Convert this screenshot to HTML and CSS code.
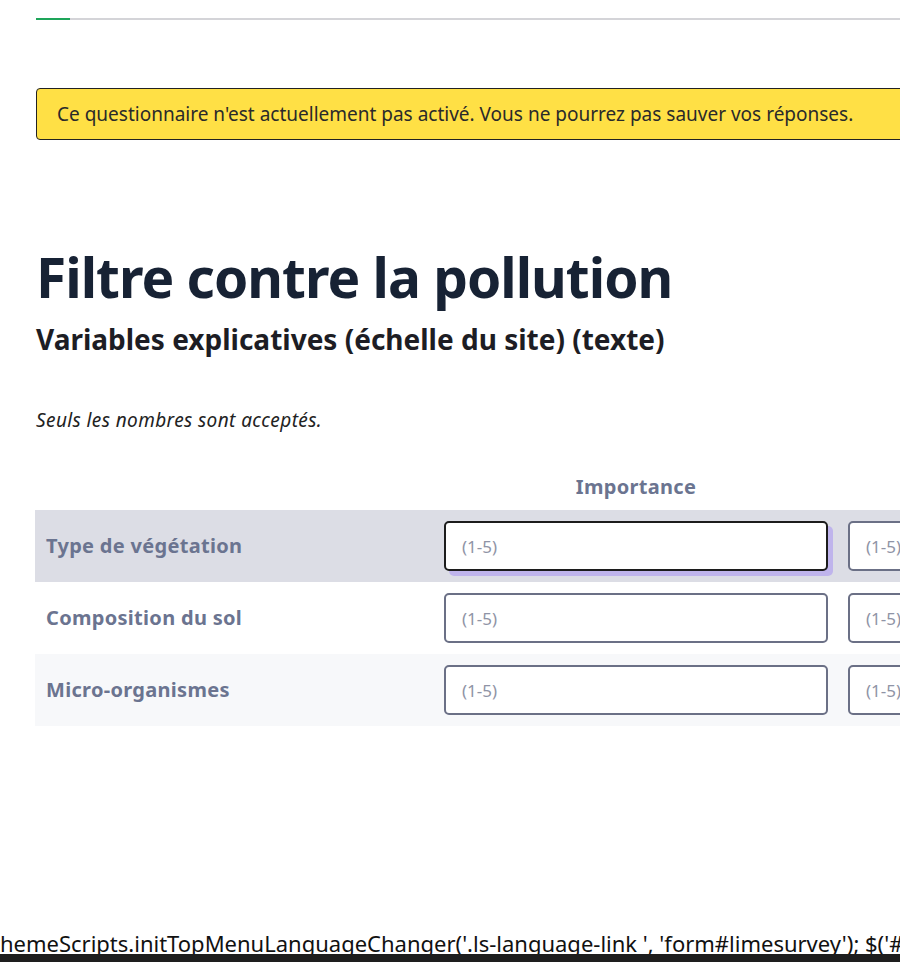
FILE: index.html
```html
<!DOCTYPE html>
<html lang="fr">
<head>
	<meta charset="UTF-8">
	<title>Filtre contre la pollution</title>
	<link rel="stylesheet" href="styles.css">
</head>
<body>
	<div id="page">
		<div class="progress"><div class="progress-done"></div></div>

		<div class="alert">Ce questionnaire n'est actuellement pas activé. Vous ne pourrez pas sauver vos réponses.</div>

		<h1 class="group-title">Filtre contre la pollution</h1>
		<h2 class="question-title">Variables explicatives (échelle du site) (texte)</h2>
		<p class="hint">Seuls les nombres sont acceptés.</p>

		<div class="answers">
			<div class="head"></div>
			<div class="head">Importance</div>
			<div class="head"></div>

			<div class="row row-active">
				<div class="label">Type de végétation</div>
				<div class="cell"><input class="num focused" type="text" placeholder="(1-5)"></div>
				<div class="cell"><input class="num" type="text" placeholder="(1-5)"></div>
			</div>
			<div class="row">
				<div class="label">Composition du sol</div>
				<div class="cell"><input class="num" type="text" placeholder="(1-5)"></div>
				<div class="cell"><input class="num" type="text" placeholder="(1-5)"></div>
			</div>
			<div class="row row-alt">
				<div class="label">Micro-organismes</div>
				<div class="cell"><input class="num" type="text" placeholder="(1-5)"></div>
				<div class="cell"><input class="num" type="text" placeholder="(1-5)"></div>
			</div>
		</div>
	</div>

	<div id="footer">
		<div class="script-line">themeScripts.initTopMenuLanguageChanger('.ls-language-link ', 'form#limesurvey'); $('#limesurvey').submit();</div>
		<div class="bar"></div>
	</div>
</body>
</html>
```
FILE: styles.css
```css
*{
	padding: 0;
	margin: 0;
	box-sizing: border-box;
}
body{
	background-color: #fff;
	font-family: "Noto Sans", "Open Sans", sans-serif;
	color: #1e2433;
	overflow: hidden;
	width: 900px;
	height: 962px;
}
#page{
	width: 1250px;
	padding: 18px 0 0 36px;
	height: 916px;
}
.progress{
	height: 2px;
	background-color: #d4d4d8;
}
.progress-done{
	width: 34px;
	height: 2px;
	background-color: #1ea55a;
}
.alert{
	margin-top: 68px;
	height: 52px;
	padding: 0 20px;
	line-height: 50px;
	font-size: 19px;
	color: #2a2a2a;
	background-color: #ffe045;
	border: 1px solid #222;
	border-radius: 4px;
}
.group-title{
	margin-top: 102px;
	font-size: 55px;
	line-height: 70px;
	font-weight: 700;
	color: #172234;
	letter-spacing: -1px;
}
.question-title{
	margin-top: 9px;
	font-size: 28px;
	line-height: 36px;
	font-weight: 700;
	color: #1d1d24;
}
.hint{
	margin-top: 50px;
	font-size: 19px;
	line-height: 26px;
	letter-spacing: 0.4px;
	font-style: italic;
	color: #222;
}
.answers{
	margin-top: 36px;
	margin-left: -1px;
	display: grid;
	grid-template-columns: 399px 404px 404px;
}
.head{
	height: 41px;
	text-align: center;
	font-size: 20px;
	letter-spacing: 0.3px;
	font-weight: 700;
	color: #6b7490;
	line-height: 36px;
}
.row{
	display: contents;
}
.row > div{
	height: 72px;
	background-color: #fff;
}
.row-active > div{
	background-color: #dcdde5;
}
.row-alt > div{
	background-color: #f7f8fa;
}
.label{
	padding-left: 11px;
	line-height: 72px;
	font-size: 20px;
	letter-spacing: 0.3px;
	font-weight: 700;
	color: #6b7490;
}
.cell{
	padding: 11px 10px;
}
.num{
	width: 384px;
	height: 50px;
	padding-left: 16px;
	font-family: inherit;
	font-size: 17px;
	border: 2px solid #6b7086;
	border-radius: 5px;
	background: #fff;
	outline: none;
}
.num::placeholder{
	color: #8f94a6;
}
.num.focused{
	border-color: #1c1c1c;
	box-shadow: 5px 5px 0 #bfb4ec;
}
#footer{
	height: 46px;
	overflow: hidden;
}
.script-line{
	white-space: nowrap;
	margin-left: -8px;
	font-size: 22px;
	line-height: 54px;
	color: #111;
	height: 38px;
	overflow: hidden;
}
.bar{
	height: 8px;
	background-color: #1e1e1e;
}
```
